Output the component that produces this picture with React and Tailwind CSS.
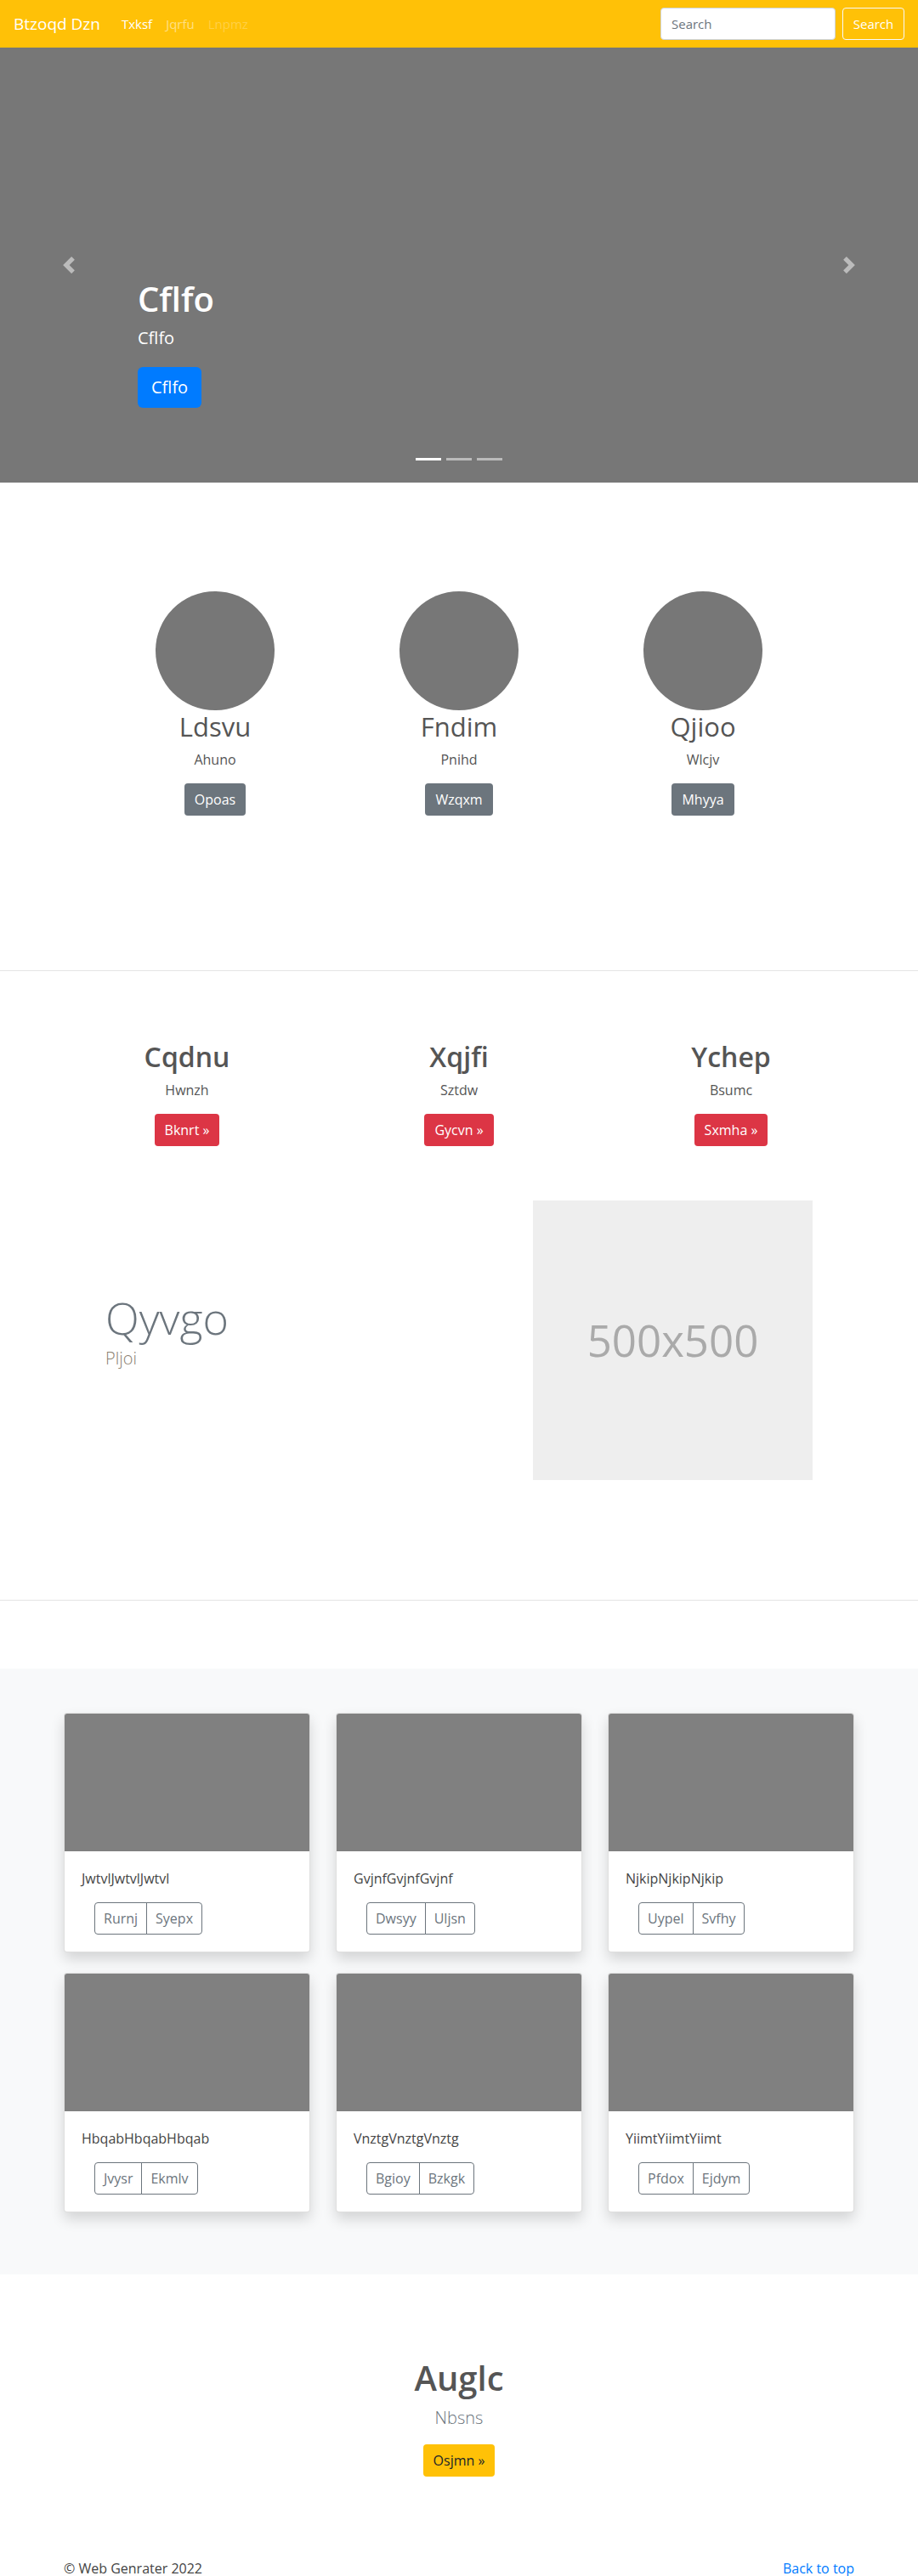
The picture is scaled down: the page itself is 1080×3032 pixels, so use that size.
import React from 'react';

const team = [
    { name: 'Ldsvu', sub: 'Ahuno', btn: 'Opoas' },
    { name: 'Fndim', sub: 'Pnihd', btn: 'Wzqxm' },
    { name: 'Qjioo', sub: 'Wlcjv', btn: 'Mhyya' },
];

const features = [
    { title: 'Cqdnu', sub: 'Hwnzh', btn: 'Bknrt' },
    { title: 'Xqjfi', sub: 'Sztdw', btn: 'Gycvn' },
    { title: 'Ychep', sub: 'Bsumc', btn: 'Sxmha' },
];

const cards = [
    { text: 'JwtvlJwtvlJwtvl', a: 'Rurnj', b: 'Syepx' },
    { text: 'GvjnfGvjnfGvjnf', a: 'Dwsyy', b: 'Uljsn' },
    { text: 'NjkipNjkipNjkip', a: 'Uypel', b: 'Svfhy' },
    { text: 'HbqabHbqabHbqab', a: 'Jvysr', b: 'Ekmlv' },
    { text: 'VnztgVnztgVnztg', a: 'Bgioy', b: 'Bzkgk' },
    { text: 'YiimtYiimtYiimt', a: 'Pfdox', b: 'Ejdym' },
];

const Chevron = ({ flip }) => (
    <svg width="20" height="20" viewBox="0 0 8 8" fill="#fff" className={flip ? 'rotate-180' : ''}>
        <path d="M5.25 0l-4 4 4 4 1.5-1.5-2.5-2.5 2.5-2.5-1.5-1.5z" />
    </svg>
);

const App = () => {
    return (
        <div className="w-full bg-white font-['Open_Sans',sans-serif] text-[#212529]">
            {/* navbar */}
            <nav className="h-[56px] bg-[#ffc107] flex items-center px-4">
                <a className="text-[19px] leading-[30px] text-white mr-[17px]">Btzoqd Dzn</a>
                <ul className="flex text-[15px] leading-6">
                    <li className="px-2 text-white">Txksf</li>
                    <li className="px-2 text-white/50">Jqrfu</li>
                    <li className="px-2 text-white/25">Lnpmz</li>
                </ul>
                <form className="ml-auto flex items-center">
                    <input
                        type="text"
                        placeholder="Search"
                        className="w-[206px] h-[38px] px-3 bg-white border border-[#ced4da] rounded text-[15px] placeholder:text-[#6c757d] mr-2"
                    />
                    <button type="button" className="w-[73px] h-[38px] border border-[#f8f9fa] rounded text-white text-[15px]">Search</button>
                </form>
            </nav>

            {/* carousel */}
            <div className="relative h-[512px] bg-[#777] flex flex-col pl-[162px] pt-[272px]">
                <h1 className="text-[40px] leading-[48px] font-semibold text-white">Cflfo</h1>
                <p className="mt-[7px] text-[20px] leading-[30px] text-white">Cflfo</p>
                <div className="mt-[19px]">
                    <button className="h-[48px] px-4 bg-[#007bff] text-white text-[20px] rounded-md">Cflfo</button>
                </div>
                <div className="absolute left-[71px] top-[246px] opacity-50"><Chevron /></div>
                <div className="absolute right-[71px] top-[246px] opacity-50"><Chevron flip /></div>
                <div className="absolute bottom-[26px] left-0 right-0 flex justify-center gap-[6px]">
                    <span className="w-[30px] h-[3px] bg-white"></span>
                    <span className="w-[30px] h-[3px] bg-white/50"></span>
                    <span className="w-[30px] h-[3px] bg-white/50"></span>
                </div>
            </div>

            {/* team */}
            <section className="pt-[128px] pb-[182px]">
                <div className="w-[861px] mx-auto grid grid-cols-3">
                    {team.map(t => (
                        <div key={t.name} className="flex flex-col items-center">
                            <div className="w-[140px] h-[140px] rounded-full bg-[#777]"></div>
                            <h2 className="text-[31px] leading-[38px] text-[#555]">{t.name}</h2>
                            <p className="mt-2 text-[16px] leading-6 text-[#555]">{t.sub}</p>
                            <button className="mt-4 h-[38px] px-3 bg-[#6c757d] text-white text-[16px] rounded">{t.btn}</button>
                        </div>
                    ))}
                </div>
            </section>

            <hr className="border-0 h-px bg-black/10" />

            {/* features */}
            <section className="pt-[82px]">
                <div className="w-[960px] mx-auto grid grid-cols-3 text-center">
                    {features.map(f => (
                        <div key={f.title} className="flex flex-col items-center">
                            <h2 className="text-[32px] leading-[38px] font-semibold text-[#555]">{f.title}</h2>
                            <p className="mt-2 text-[16px] leading-6 text-[#555]">{f.sub}</p>
                            <button className="mt-4 h-[38px] px-3 bg-[#dc3545] text-white text-[16px] rounded">{f.btn} »</button>
                        </div>
                    ))}
                </div>
                <div className="mt-[64px] flex items-start">
                    <div className="flex-1 pl-[124px] pt-[107px]">
                        <h2 className="text-[52px] leading-[62px] font-light text-[#6c757d]">Qyvgo</h2>
                        <p className="mt-[2px] text-[20px] leading-[30px] font-light text-[#8a8070]">Pljoi</p>
                    </div>
                    <div className="w-[329px] h-[329px] mr-[124px] bg-[#eee] flex items-center justify-center text-[51px] text-[#aaa]">500x500</div>
                </div>
            </section>

            <hr className="mt-[141px] border-0 h-px bg-black/10" />

            {/* album */}
            <section className="mt-[80px] bg-[#f8f9fa] pt-[52px] pb-[73px]">
                <div className="w-[960px] mx-auto px-[15px] grid grid-cols-3 gap-x-[30px] gap-y-[24px]">
                    {cards.map(c => (
                        <div key={c.text} className="bg-white border border-black/[0.125] rounded overflow-hidden shadow-[0_8px_16px_rgba(0,0,0,0.15)]">
                            <div className="h-[162px] bg-[#808080]"></div>
                            <div className="p-5">
                                <p className="text-[16px] leading-6 text-[#444]">{c.text}</p>
                                <div className="mt-4 ml-[15px] inline-flex">
                                    <button className="h-[38px] px-[10px] border border-[#6c757d] text-[#6c757d] text-[16px] rounded-l">{c.a}</button>
                                    <button className="-ml-px h-[38px] px-[10px] border border-[#6c757d] text-[#6c757d] text-[16px] rounded-r">{c.b}</button>
                                </div>
                            </div>
                        </div>
                    ))}
                </div>
            </section>

            {/* call to action */}
            <section className="pt-[98px] flex flex-col items-center text-center">
                <h1 className="text-[40px] leading-[48px] font-semibold text-[#555]">Auglc</h1>
                <p className="mt-2 text-[20px] leading-[30px] font-light text-[#6c757d]">Nbsns</p>
                <button className="mt-4 h-[38px] px-3 bg-[#ffc107] text-[#212529] text-[16px] rounded">Osjmn »</button>
            </section>

            <footer className="mt-[96px] w-[930px] mx-auto flex justify-between text-[16px] leading-6">
                <p className="text-[#444]">© Web Genrater 2022</p>
                <a className="text-[#007bff]">Back to top</a>
            </footer>
        </div>
    );
};

export default App;
